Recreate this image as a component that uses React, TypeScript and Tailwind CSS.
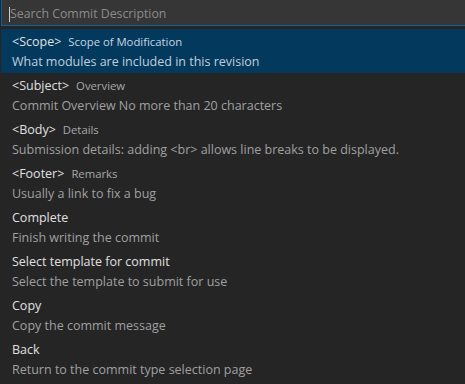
import React from 'react';

const items = [
  { label: '<Scope>', detail: 'Scope of Modification', desc: 'What modules are included in this revision' },
  { label: '<Subject>', detail: 'Overview', desc: 'Commit Overview No more than 20 characters' },
  { label: '<Body>', detail: 'Details', desc: 'Submission details: adding <br> allows line breaks to be displayed.' },
  { label: '<Footer>', detail: 'Remarks', desc: 'Usually a link to fix a bug' },
  { label: 'Complete', detail: '', desc: 'Finish writing the commit' },
  { label: 'Select template for commit', detail: '', desc: 'Select the template to submit for use' },
  { label: 'Copy', detail: '', desc: 'Copy the commit message' },
  { label: 'Back', detail: '', desc: 'Return to the commit type selection page' },
];

export default function App() {
  return (
    <div className="w-[465px] h-[384px] bg-[#252526] overflow-hidden" style={{ fontFamily: '"Open Sans", "Noto Sans", sans-serif' }}>
      {/* Search box */}
      <div className="pl-[1px]">
        <div className="h-[26px] bg-[#363636] border border-[#0e639c] border-t-0 border-r-0 flex items-center pl-[7px] pt-[3px]">
          <span className="w-px h-[15px] bg-[#cccccc]" />
          <span className="text-[12.3px] text-[#8b8b8b] leading-none">Search Commit Description</span>
        </div>
      </div>

      {/* List */}
      <div className="mt-[3px] pl-[1px]">
        {items.map((item, i) => (
          <div
            key={i}
            className={`h-[44px] pl-[11px] flex flex-col justify-center ${i === 0 ? 'bg-[#04395e]' : ''}`}
          >
            <div className="flex items-baseline gap-[7px] h-[20px] leading-[21px]">
              <span className="text-[12.5px] text-[#e0e0e0]">{item.label}</span>
              {item.detail && (
                <span className={`text-[11.3px] ${i === 0 ? 'text-[#c5d5e2]' : 'text-[#a8a8a8]'}`}>{item.detail}</span>
              )}
            </div>
            <div className={`text-[12.5px] h-[20px] leading-[22px] ${i === 0 ? 'text-[#c0cfdb]' : 'text-[#a0a0a0]'}`}>{item.desc}</div>
          </div>
        ))}
      </div>
    </div>
  );
}
